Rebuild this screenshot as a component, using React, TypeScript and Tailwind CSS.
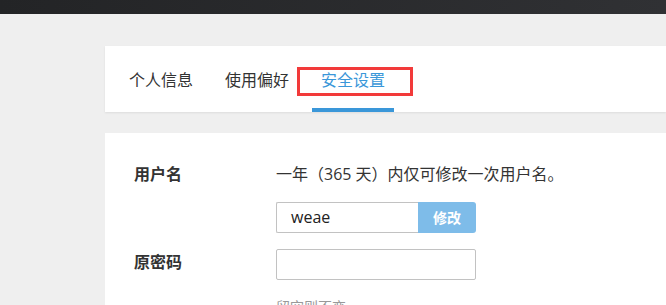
import React from 'react';

const font = { fontFamily: '"Open Sans", "Noto Sans CJK SC", sans-serif' };

const tabs = ['个人信息', '使用偏好', '安全设置'];

export default function App() {
  const active = 2;
  return (
    <div className="min-h-[305px] bg-[#efefef] overflow-hidden" style={font}>
      {/* Top bar */}
      <div className="h-[14px] bg-gradient-to-r from-[#232426] to-[#303134]" />

      <div className="pl-[105px] pt-[32px]">
        {/* Tabs card */}
        <div className="bg-white h-[66px] pl-[15px] flex gap-[14px] shadow-[0_1px_2px_rgba(0,0,0,0.08)]">
          {tabs.map((t, i) => (
            <div
              key={t}
              className={
                'relative px-[9px] pt-[22px] pb-[16px] border-b-4 text-[16px] leading-[24px] ' +
                (i === active ? 'border-[#3a97d9] text-[#3a97d9]' : 'border-transparent text-[#333]')
              }
            >
              {t}
              {i === active && (
                <div className="absolute left-[-15px] right-[-19px] top-[21px] h-[29px] border-[3px] border-[#f23a3a]" />
              )}
            </div>
          ))}
        </div>

        {/* Settings card */}
        <div className="bg-white mt-[21px] pl-[29px] pt-[29px] h-[200px]">
          <div className="grid grid-cols-[142px_1fr] items-start text-[#333]">
            <div className="text-[16px] leading-[24px] font-bold">用户名</div>
            <div className="text-[16px] leading-[24px]">一年（365 天）内仅可修改一次用户名。</div>

            <div />
            <div className="mt-[16px] flex h-[31px] w-[200px]">
              <div className="w-[142px] border border-[#c2c2c2] border-r-0 rounded-l-[2px] pl-[14px] text-[16px] leading-[29px] text-[#222]">
                weae
              </div>
              <button className="w-[58px] bg-[#7ebce9] rounded-r-[3px] text-white text-[14px] font-bold">
                修改
              </button>
            </div>

            <div className="mt-[17px] text-[16px] leading-[24px] font-bold">原密码</div>
            <div className="mt-[16px] h-[31px] w-[200px] border border-[#c2c2c2] rounded-[2px]" />

            <div />
            <div className="mt-[17px] text-[14px] leading-[20px] text-[#999]">留空则不变</div>
          </div>
        </div>
      </div>
    </div>
  );
}
